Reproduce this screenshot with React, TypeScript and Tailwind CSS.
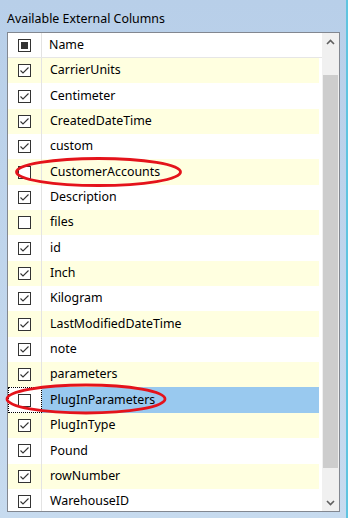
import React from "react";

const rows: { name: string; checked: boolean }[] = [
  { name: "CarrierUnits", checked: true },
  { name: "Centimeter", checked: true },
  { name: "CreatedDateTime", checked: true },
  { name: "custom", checked: true },
  { name: "CustomerAccounts", checked: false },
  { name: "Description", checked: true },
  { name: "files", checked: false },
  { name: "id", checked: true },
  { name: "Inch", checked: true },
  { name: "Kilogram", checked: true },
  { name: "LastModifiedDateTime", checked: true },
  { name: "note", checked: true },
  { name: "parameters", checked: true },
  { name: "PlugInParameters", checked: false },
  { name: "PlugInType", checked: true },
  { name: "Pound", checked: true },
  { name: "rowNumber", checked: true },
  { name: "WarehouseID", checked: true },
];

function CheckBox({ checked }: { checked: boolean }) {
  return (
    <svg width="13" height="13" viewBox="0 0 13 13" className="block">
      <rect x="0.5" y="0.5" width="12" height="12" fill="#ffffff" stroke="#333333" />
      {checked && (
        <polyline points="2.5,6.5 5,9 10.5,3.5" fill="none" stroke="#333333" strokeWidth="1.1" />
      )}
    </svg>
  );
}

function HeaderBox() {
  return (
    <svg width="13" height="13" viewBox="0 0 13 13" className="block">
      <rect x="0.5" y="0.5" width="12" height="12" fill="#ffffff" stroke="#333333" />
      <rect x="3" y="3" width="7" height="7" fill="#333333" />
    </svg>
  );
}

export default function App() {
  return (
    <div
      className="relative w-[348px] h-[518px] overflow-hidden bg-gradient-to-b from-[#b8cfe9] to-[#c7dbef] text-black"
      style={{ fontFamily: '"Segoe UI", "Noto Sans", sans-serif' }}
    >
      <div className="pl-[7px] pt-[11px] text-[12.4px] leading-[16px]">Available External Columns</div>
      <div className="ml-[7px] mt-[5px] w-[333px] h-[480px] border border-[#828790] bg-white flex">
        <div className="flex-1 flex flex-col overflow-hidden">
          <div className="h-[25px] shrink-0 flex border-b border-[#e6e6e6]">
            <div className="w-[34px] shrink-0 flex items-center justify-center border-r border-[#e3e3e3]">
              <HeaderBox />
            </div>
            <div className="flex-1 flex items-center pl-[7px] text-[12.4px]">Name</div>
            <div className="w-[3px]" />
          </div>
          {rows.map((r, i) => {
            const selected = r.name === "PlugInParameters";
            const bg = selected ? "bg-[#99c9ef]" : i % 2 === 0 ? "bg-[#ffffe0]" : "bg-white";
            return (
              <div key={r.name} className="h-[25.35px] shrink-0 flex">
                <div
                  className={
                    "w-[34px] shrink-0 flex items-center justify-center border-r border-[#e3e3e3] " +
                    (selected ? "bg-white outline outline-1 outline-dotted outline-black -outline-offset-1" : i % 2 === 0 ? "bg-[#ffffe0]" : "bg-white")
                  }
                >
                  <CheckBox checked={r.checked} />
                </div>
                <div className={"flex-1 flex items-center pl-[8px] text-[12.4px] " + bg}>{r.name}</div>
                <div className="w-[3px] bg-white" />
              </div>
            );
          })}
        </div>
        <div className="w-[17px] shrink-0 bg-[#f0f0f0] flex flex-col">
          <div className="h-[17px] shrink-0 flex items-center justify-center">
            <svg width="9" height="6" viewBox="0 0 9 6">
              <polyline points="1,5 4.5,1.5 8,5" fill="none" stroke="#606060" strokeWidth="1.6" />
            </svg>
          </div>
          <div className="h-[25px] shrink-0" />
          <div className="h-[393px] shrink-0 mx-[1px] bg-[#cdcdcd]" />
          <div className="flex-1" />
          <div className="h-[17px] shrink-0 flex items-center justify-center">
            <svg width="9" height="6" viewBox="0 0 9 6">
              <polyline points="1,1 4.5,4.5 8,1" fill="none" stroke="#606060" strokeWidth="1.6" />
            </svg>
          </div>
        </div>
      </div>
      <div className="absolute right-0 top-0 w-[2px] h-full bg-[#5fc4e0]" />
      <svg className="absolute left-0 top-0 pointer-events-none" width="348" height="518">
        <ellipse cx="98.5" cy="172" rx="82" ry="13.5" fill="none" stroke="#e4131b" strokeWidth="2.8" />
        <ellipse cx="86" cy="399" rx="79" ry="14" fill="none" stroke="#e4131b" strokeWidth="2.8" />
      </svg>
    </div>
  );
}
